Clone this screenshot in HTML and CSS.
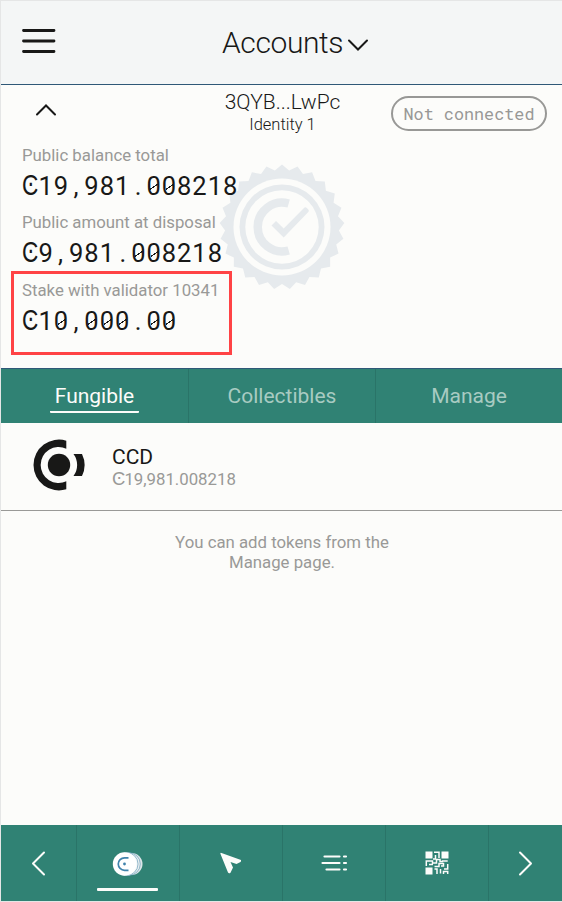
FILE: index.html
```html
<!DOCTYPE html>
<html lang="en">
<head>
<meta charset="utf-8">
<title>Accounts</title>
<link rel="stylesheet" href="styles.css">
</head>
<body>
<div class="wallet">
  <header class="topbar">
    <svg class="menu" width="34" height="26" viewBox="0 0 34 26"><path d="M1.5 2.5h30.500M1.5 13h30.500M1.5 23.5h30.500"/></svg>
    <h1 class="title">Accounts</h1>
    <svg class="chevron" width="22" height="14" viewBox="0 0 22 14"><path d="M2 2.500L11 11.5 20 2.500"/></svg>
  </header>
  <section class="account">
    <div class="account-head">
      <svg class="collapse" width="22" height="14" viewBox="0 0 22 14"><path d="M2 11.500L11 2.500 20 11.500"/></svg>
      <div class="identity"><div class="address">3QYB...LwPc</div><div class="id-name">Identity 1</div></div>
      <div class="status">Not connected</div>
    </div>
    <svg class="seal" width="126" height="126" viewBox="-63 -63 126 126">
      <path id="teeth" class="seal-fill"/>
      <circle class="paper" r="48.500"/><circle class="seal-fill" r="42.500"/><circle class="paper" r="36.700"/>
      <path class="seal-c" d="M6.700 -23.500A24.400 24.400 0 1 0 6.700 23.500"/>
      <path class="seal-fill" d="M-10.500 -1.500L-6 -6 1.700 1.500 22.500 -19.500Q23.500 -20.300 24.500 -19.300L26.500 -17.200Q27.300 -16.300 26.500 -15.300L1.700 10.500Z"/>
    </svg>
    <div class="balances">
      <div class="label">Public balance total</div>
      <div class="amount"><span class="ccd">Ͼ</span>19<span class="comma">,</span>981<span class="dot">.</span><span class="zero">0</span><span class="zero">0</span>8218</div>
      <div class="label">Public amount at disposal</div>
      <div class="amount"><span class="ccd">Ͼ</span>9<span class="comma">,</span>981<span class="dot">.</span><span class="zero">0</span><span class="zero">0</span>8218</div>
      <div class="label">Stake with validator 10341</div>
      <div class="amount"><span class="ccd">Ͼ</span>1<span class="zero">0</span><span class="comma">,</span><span class="zero">0</span><span class="zero">0</span><span class="zero">0</span><span class="dot">.</span><span class="zero">0</span><span class="zero">0</span></div>
    </div>
    <div class="highlight"></div>
  </section>
  <nav class="tabs">
    <div class="tab active"><span>Fungible</span></div>
    <div class="tab"><span>Collectibles</span></div>
    <div class="tab"><span>Manage</span></div>
  </nav>
  <div class="token">
    <svg width="52" height="52" viewBox="-26 -26 52 52">
      <circle r="11.200" cx="0" fill="#181817"/>
      <path d="M7.300 -24.300V-16.300A18 18 0 1 0 7.300 16.300V24.300A25.400 25.400 0 1 1 7.300 -24.300Z" fill="#181817"/>
      <path d="M14.500 -11H23A25.400 25.400 0 0 1 23 11H14.500A18.500 18.500 0 0 0 14.500 -11Z" fill="#181817"/>
    </svg>
    <div><div class="token-name">CCD</div><div class="token-amount"><span class="ccd-small">Ͼ</span>19,981.008218</div></div>
  </div>
  <p class="hint">You can add tokens from the<br>Manage page.</p>
  <nav class="bottom">
    <div class="arrow"><svg width="15" height="25" viewBox="0 0 15 25"><path class="line" d="M13 1.500L2 12.500 13 23.500"/></svg></div>
    <div class="item selected">
      <svg width="32" height="26" viewBox="0 0 32 26">
        <circle cx="19.500" cy="13" r="11" fill="#dce5e8"/>
        <circle cx="17" cy="13" r="11.300" fill="#e8eef0" stroke="#6c9eb9" stroke-width=".7"/>
        <circle cx="14.500" cy="13" r="11.500" fill="#f7fafa" stroke="#6c9eb9" stroke-width=".7"/>
        <circle cx="12.500" cy="13" r="11.700" fill="#fff"/>
        <path d="M16.500 6.800H12.500A6.200 6.200 0 0 0 12.500 19.300H16.500" fill="none" stroke="#4083ac" stroke-width="1.700"/>
        <circle cx="12.500" cy="13" r="1.400" fill="#4083ac"/>
      </svg>
    </div>
    <div class="item"><svg width="22" height="22" viewBox="0 0 22 22"><path d="M.8 .8L21 8Q21.300 9.300 20.500 10L16.500 12 10.500 10 13 15.500 10.500 20.700Q9 22 8 20.500L.3 1.500Z" fill="#fcfcfa"/></svg></div>
    <div class="item"><svg width="27" height="18" viewBox="0 0 27 18"><path class="bars" d="M3.500 2.500H18.500M1.500 9H18.500M5.500 15.500H18.500M23 2.500H25M23 9H25M23 15.500H25"/></svg></div>
    <div class="item"><svg width="24" height="24" viewBox="0 0 24 24">
      <path fill="#fcfcfa" d="M.5 .5h7v7h-7zM16.500 .5h7v7h-7zM.5 16.500h7v7h-7z"/>
      <path class="maze" d="M9 1.300H14V7M10.500 4V8H8M1.300 15V10H7.500V12H11.500V8.500H15V10.500H18M4 13.500H8M17 10H22.700M22.700 13V18H19M9.500 15.500H14V12.500H18.500V15H16M9.500 18H12V23M15.500 18V22.500M18.500 23V20.500H22.700V23"/>
    </svg></div>
    <div class="arrow"><svg width="15" height="25" viewBox="0 0 15 25"><path class="line" d="M2 1.500L13 12.500 2 23.500"/></svg></div>
  </nav>
</div>
<script src="seal.js"></script>
</body>
</html>
```
FILE: styles.css
```css
* { box-sizing: border-box; }
body { margin: 0; background: #fcfcfa; color: #181817; font-family: Roboto, "Liberation Sans", sans-serif; }
svg { display: block; flex: none; }
.wallet { width: 562px; height: 902px; display: flex; flex-direction: column; border: 1px solid #e5e6e6; border-right: 0; }
.topbar { height: 84px; flex: none; display: flex; align-items: center; background: #f4f6f6; border-bottom: 1px solid #2f5877; padding-left: 21px; }
.menu, .chevron, .collapse { fill: none; stroke: #181817; stroke-width: 2.8; stroke-linecap: round; }
.menu { margin-top: -3px; }
.title { margin: 1px 0 0 166px; font-size: 30px; font-weight: 300; line-height: 40px; letter-spacing: -.4px; white-space: nowrap; }
.chevron, .collapse { stroke-width: 2; }
.chevron { margin: 4px 0 0 4px; }
.account { position: relative; height: 283px; flex: none; }
.account-head { height: 60px; display: flex; }
.collapse { margin: 18px 0 0 34px; }
.identity { width: 160px; margin: 5px 0 0 145.500px; text-align: center; font-weight: 300; }
.address { font-size: 21px; line-height: 25px; }
.id-name { font-size: 16.5px; line-height: 20px; }
.status { width: 156px; height: 35px; margin: 11px 0 0 28.500px; border: 2px solid #989896; border-radius: 18px; color: #989896; font: 16.8px/32px "Roboto Mono", "Liberation Mono", monospace; text-align: center; white-space: nowrap; }
.seal { position: absolute; left: 218px; top: 79px; }
.seal-fill { fill: #e6eaed; }
.paper { fill: #fcfcfa; }
.seal-c { fill: none; stroke: #e6eaed; stroke-width: 8.500; }
.balances { position: relative; padding-left: 21px; }
.label { height: 20px; font-size: 16.800px; line-height: 20px; color: #999997; white-space: nowrap; }
.amount { height: 47.400px; padding-top: 5px; font-size: 25.500px; line-height: 32px; letter-spacing: .95px; white-space: nowrap; }
.ccd { display: inline-block; width: 16.500px; font-size: 29px; line-height: 20px; letter-spacing: 0; transform: scaleX(.78); transform-origin: left; }
.ccd-small { font-size: 18.500px; line-height: 18px; letter-spacing: -1px; }
.comma { padding: 0 5px 0 4.300px; }
.dot { padding: 0 4px 0 4.600px; }
.zero { background: linear-gradient(145deg, transparent 46%, #181817 47% 55%, transparent 56%) no-repeat 4px 11px / 8px 9px; }
.highlight { position: absolute; left: 10px; top: 186px; width: 221px; height: 84px; border: 3px solid #ff4345; }
.tabs { height: 55px; flex: none; display: grid; grid-template-columns: 188px 187px 1fr; background: #308274; border-top: 1px solid #2f5877; }
.tab { display: flex; justify-content: center; border-right: 1px solid #2a7468; color: #a8cbc2; font-size: 21px; line-height: 28px; padding-top: 13px; }
.tab:last-child { border: 0; }
.tab span { height: 31px; padding: 0 5px; }
.active span { color: #fcfcfa; border-bottom: 2px solid #fcfcfa; border-radius: 1px; }
.token { height: 88px; flex: none; display: flex; align-items: center; gap: 27px; padding-left: 32px; padding-bottom: 3px; border-bottom: 1px solid #999997; }
.token-name { font-size: 21px; line-height: 25px; margin-top: 3px; }
.token-amount { height: 20px; margin-top: -1px; font-size: 16.800px; line-height: 20px; color: #999997; }
.hint { margin: 21px 0 0 1px; font-size: 16.800px; line-height: 20px; text-align: center; color: #999997; }
.bottom { height: 76px; margin-top: auto; flex: none; display: grid; grid-template-columns: 76px 103px 103px 103px 103px 1fr; background: #308274; }
.bottom > div { display: flex; align-items: center; justify-content: center; border-right: 1px solid #2a7468; }
.bottom > div:last-child { border: 0; }
.bottom .selected { flex-direction: column; gap: 11px; padding: 15px 2px 0 0; }
.selected svg { margin-left: 1px; }
.selected::after { content: ""; width: 61px; height: 3px; border-radius: 1px; background: #fcfcfa; }
.line { fill: none; stroke: #fcfcfa; stroke-width: 2; stroke-linecap: round; stroke-linejoin: round; }
.bars { fill: none; stroke: #fcfcfa; stroke-width: 2.200; stroke-linecap: round; }
.maze { fill: none; stroke: #fcfcfa; stroke-width: 1.500; }
```
FILE: seal.js
```js
const points = [];
for (let i = 0; i < 50; i++) {
  const angle = i * Math.PI / 25;
  const radius = i % 2 ? 57 : 62.5;
  points.push(`${(radius * Math.sin(angle)).toFixed(2)} ${(-radius * Math.cos(angle)).toFixed(2)}`);
}
document.getElementById('teeth').setAttribute('d', `M${points.join('L')}Z`);
```
